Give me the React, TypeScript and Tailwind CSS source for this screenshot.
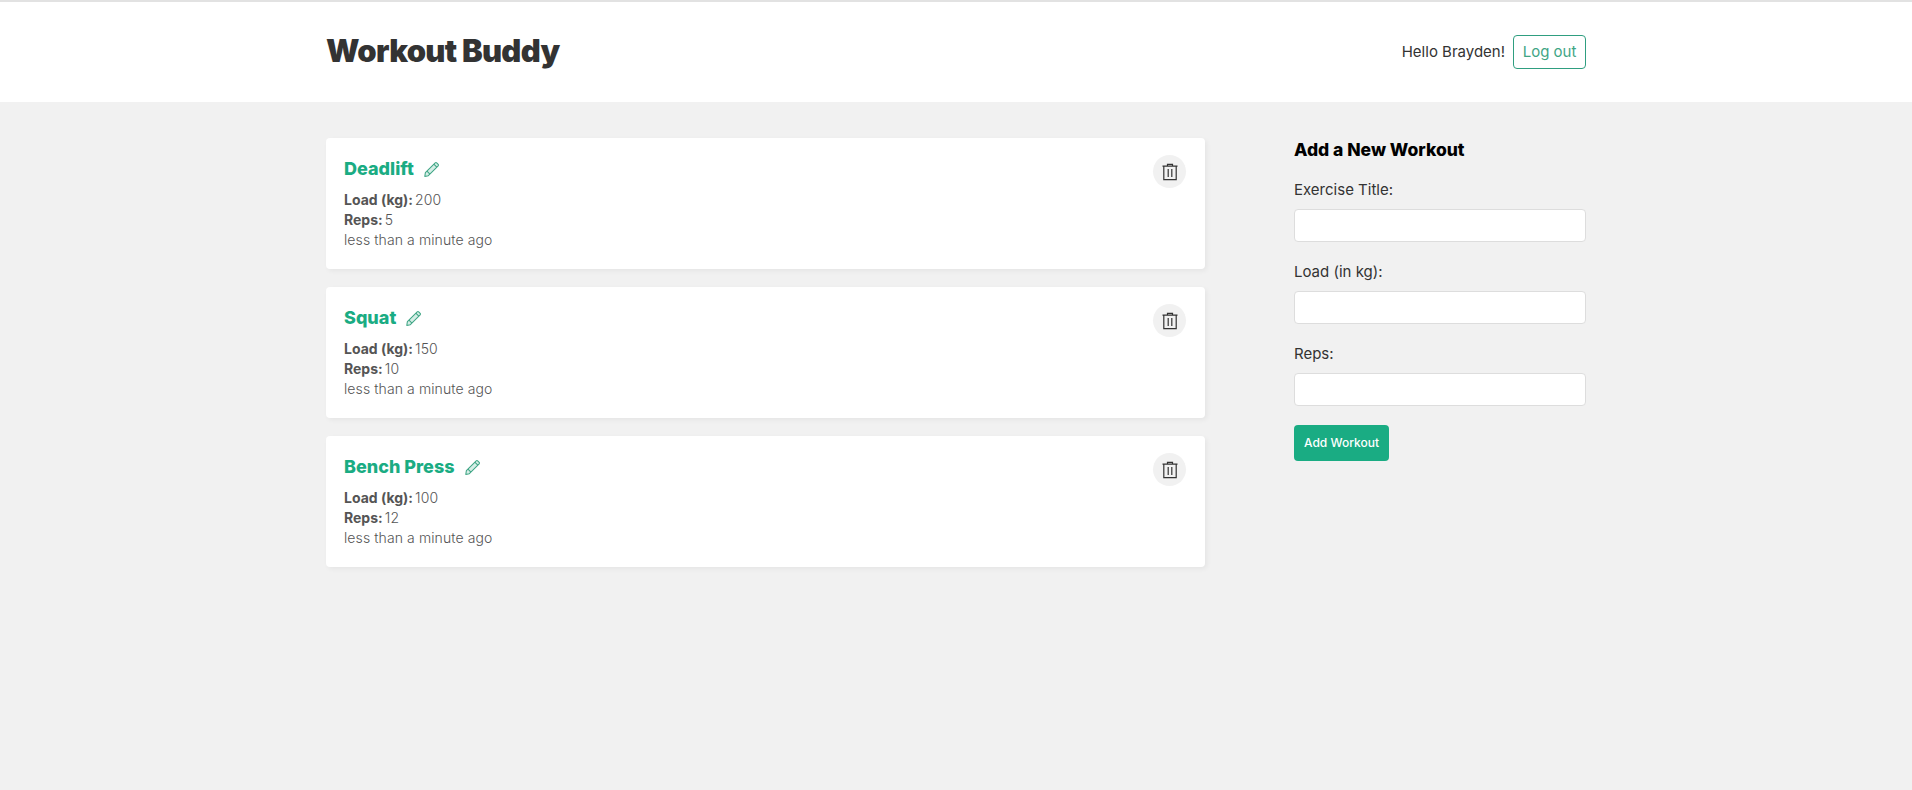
type Workout = { title: string; load: number; reps: number };

const workouts: Workout[] = [
  { title: "Deadlift", load: 200, reps: 5 },
  { title: "Squat", load: 150, reps: 10 },
  { title: "Bench Press", load: 100, reps: 12 },
];

const TrashIcon = () => (
  <svg width="20" height="20" viewBox="0 0 20 20" fill="none" stroke="#333" strokeWidth="1.2">
    <path d="M2.5 4.2h15M7.5 4.2V2.4h5v1.8M3.8 4.2v13.4h12.4V4.2M8.2 7v8M11.8 7v8" />
  </svg>
);

const PencilIcon = () => (
  <svg width="16" height="16" viewBox="0 0 14 14" fill="#d5eee6" stroke="#3fa585" strokeWidth="0.9" strokeLinejoin="round">
    <path d="M1.2 10.2 9.8 1.6a.9.9 0 0 1 1.3 0l1.3 1.3a.9.9 0 0 1 0 1.3l-8.6 8.6-3.1.7z" />
    <path d="M8.6 2.8l2.6 2.6M2.6 8.8l2.6 2.6" fill="none" />
  </svg>
);

const WorkoutCard = ({ workout }: { workout: Workout }) => (
  <div className="relative bg-white rounded px-[18px] pt-[19px] h-[131px] shadow-[2px_2px_5px_rgba(0,0,0,0.05)]">
    <div className="flex items-center gap-[10px] h-[24px] mb-[9px]">
      <h4 className="text-[18px] font-extrabold text-[#1aac83] leading-[24px]">{workout.title}</h4>
      <PencilIcon />
    </div>
    <p className="text-[14px] leading-[20px] font-light tracking-[0.1px] text-[#555]">
      <strong className="font-bold tracking-normal mr-[-2px]">Load (kg):</strong> {workout.load}
    </p>
    <p className="text-[14px] leading-[20px] font-light tracking-[0.1px] text-[#555]">
      <strong className="font-bold tracking-normal mr-[-2px]">Reps:</strong> {workout.reps}
    </p>
    <p className="text-[14px] leading-[20px] font-light tracking-[0.1px] text-[#555]">less than a minute ago</p>
    <span className="absolute top-[17px] right-[19px] w-[33px] h-[33px] rounded-full bg-[#f1f1f1] flex items-center justify-center">
      <TrashIcon />
    </span>
  </div>
);

const Field = ({ label }: { label: string }) => (
  <div className="mb-[19px]">
    <label className="block text-[15px] leading-[22px] text-[#333] mb-[8px]">{label}</label>
    <input className="block w-full h-[33px] bg-white border border-[#ddd] rounded" />
  </div>
);

export default function App() {
  return (
    <div className="min-h-[790px] bg-[#f1f1f1] font-['Inter',sans-serif] border-t-2 border-[#e2e2e2]">
      <header className="bg-white h-[100px]">
        <div className="mx-[326px] h-full flex items-center justify-between">
          <h1 className="text-[31px] font-black text-[#333] tracking-[-0.7px] mt-[-2px]">Workout Buddy</h1>
          <div className="flex items-center gap-[8px]">
            <span className="text-[15px] text-[#333]">Hello Brayden!</span>
            <button className="h-[34px] w-[73px] border border-[#2f9e80] rounded text-[15px] text-[#3fa585]">
              Log out
            </button>
          </div>
        </div>
      </header>
      <main className="mx-[326px] pt-[36px] flex justify-between">
        <div className="w-[879px] flex flex-col gap-[18px]">
          {workouts.map((w) => (
            <WorkoutCard key={w.title} workout={w} />
          ))}
        </div>
        <form className="w-[292px]">
          <h3 className="text-[17.5px] font-extrabold text-black leading-[24px] mb-[17px]">Add a New Workout</h3>
          <Field label="Exercise Title:" />
          <Field label="Load (in kg):" />
          <Field label="Reps:" />
          <button type="button" className="w-[95px] h-[36px] bg-[#1aac83] rounded text-white text-[12px] font-medium">
            Add Workout
          </button>
        </form>
      </main>
    </div>
  );
}
